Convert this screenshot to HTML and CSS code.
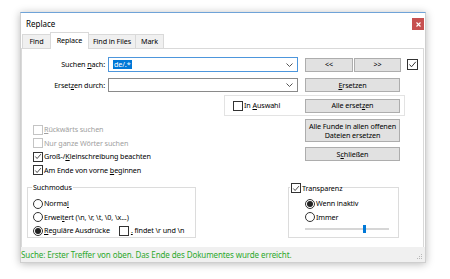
FILE: index.html
```html
<!DOCTYPE html>
<html lang="de">
<head>
<meta charset="utf-8">
<title>Replace</title>
<link rel="stylesheet" href="styles.css">
</head>
<body>
<div class="window">
  <div class="titlebar">
    <span class="title">Replace</span>
    <span class="close"><svg width="5" height="5" viewBox="0 0 5 5"><path d="M0.5 0.5 L4.5 4.5 M4.5 0.5 L0.5 4.5" stroke="#fff" stroke-width="1.1"/></svg></span>
  </div>
  <div class="tabs">
    <div class="tab t1">Find</div>
    <div class="tab active">Replace</div>
    <div class="tab t3">Find in Files</div>
    <div class="tab t4">Mark</div>
  </div>
  <div class="panel">
    <div class="row r1">
      <label class="lbl">Suchen <u>n</u>ach:</label>
      <div class="combo focus"><span class="sel">de/.*</span><svg class="chev" width="7" height="4" viewBox="0 0 7 4"><path d="M0.5 0.5 L3.5 3.5 L6.5 0.5" fill="none" stroke="#555" stroke-width="1"/></svg></div>
      <button class="btn prev">&lt;&lt;</button>
      <button class="btn next">&gt;&gt;</button>
      <span class="cb checked top"><svg width="9" height="9" viewBox="0 0 9 9"><path d="M1.5 4.5 L3.5 6.8 L7.8 1.8" fill="none" stroke="#333" stroke-width="1"/></svg></span>
    </div>
    <div class="row r2">
      <label class="lbl">Erset<u>z</u>en durch:</label>
      <div class="combo"><svg class="chev" width="7" height="4" viewBox="0 0 7 4"><path d="M0.5 0.5 L3.5 3.5 L6.5 0.5" fill="none" stroke="#555" stroke-width="1"/></svg></div>
      <button class="btn wide"><u>E</u>rsetzen</button>
    </div>
    <div class="auswahl">
      <div class="opt"><span class="cb"></span><span>In <u>A</u>uswahl</span></div>
      <button class="btn wide">Alle erset<u>z</u>en</button>
    </div>
    <div class="lower">
      <div class="checks">
        <div class="opt disabled"><span class="cb"></span><span><u>R</u>ückwärts suchen</span></div>
        <div class="opt disabled"><span class="cb"></span><span>Nur ganze Wörter suchen</span></div>
        <div class="opt"><span class="cb checked"><svg width="9" height="9" viewBox="0 0 9 9"><path d="M1.5 4.5 L3.5 6.8 L7.8 1.8" fill="none" stroke="#333" stroke-width="1"/></svg></span><span>Groß-/<u>K</u>leinschreibung beachten</span></div>
        <div class="opt"><span class="cb checked"><svg width="9" height="9" viewBox="0 0 9 9"><path d="M1.5 4.5 L3.5 6.8 L7.8 1.8" fill="none" stroke="#333" stroke-width="1"/></svg></span><span>Am Ende von vorne <u>b</u>eginnen</span></div>
      </div>
      <div class="btncol">
        <button class="btn wide tall">Alle Funde in allen offenen<br>Dateien ersetzen</button>
        <button class="btn wide">S<u>c</u>hließen</button>
      </div>
    </div>
    <div class="groups">
      <div class="group mode">
        <div class="gtitle">Suchmodus</div>
        <div class="opt"><span class="rb"></span><span>Norma<u>l</u></span></div>
        <div class="opt"><span class="rb"></span><span>Erwei<u>t</u>ert (\n, \r, \t, \0, \x...)</span></div>
        <div class="opt"><span class="rb on"></span><span><u>R</u>eguläre Ausdrücke</span><span class="cb spaced"></span><span><u>.</u> findet \r und \n</span></div>
      </div>
      <div class="group transp">
        <div class="gtitle"><span class="cb checked"><svg width="9" height="9" viewBox="0 0 9 9"><path d="M1.5 4.5 L3.5 6.8 L7.8 1.8" fill="none" stroke="#333" stroke-width="1"/></svg></span><span>Transparenz</span></div>
        <div class="opt"><span class="rb on"></span><span>Wenn inaktiv</span></div>
        <div class="opt"><span class="rb"></span><span>Immer</span></div>
        <div class="slider"><span class="thumb"></span></div>
      </div>
    </div>
  </div>
  <div class="status">
    <span>Suche: Erster Treffer von oben. Das Ende des Dokumentes wurde erreicht.</span>
    <svg class="grip" width="6" height="6" viewBox="0 0 6 6"><g fill="#b8b8b8"><rect x="4" y="0" width="1" height="1"/><rect x="2" y="2" width="1" height="1"/><rect x="4" y="2" width="1" height="1"/><rect x="0" y="4" width="1" height="1"/><rect x="2" y="4" width="1" height="1"/><rect x="4" y="4" width="1" height="1"/></g></svg>
  </div>
</div>
</body>
</html>
```

FILE: styles.css
```css
* { box-sizing: border-box; }
html, body { margin: 0; padding: 0; background: #fff; }
body {
  font-family: "Noto Sans", "Open Sans", sans-serif;
  font-size: 7.2px;
  letter-spacing: -0.1px;
  color: #000;
  width: 450px;
  height: 279px;
  overflow: hidden;
  white-space: nowrap;
}
u { text-decoration: underline; text-underline-offset: 1px; }

.window {
  margin: 12px 0 0 20px;
  width: 406px;
  height: 251px;
  border: 1px solid #cfcfcf;
  border-top-color: #6fa3d8;
  background: #fff;
  box-shadow: 0 1px 8px rgba(0,0,0,0.28);
  display: flex;
  flex-direction: column;
}

.titlebar {
  height: 19px;
  display: flex;
  align-items: flex-start;
  justify-content: space-between;
  padding-left: 5px;
}
.title { font-size: 8px; line-height: 9px; margin-top: 6px; letter-spacing: 0; }
.close {
  width: 12px;
  height: 12px;
  margin-top: 5px;
  margin-right: 1px;
  background: #c75050;
  display: flex;
  align-items: center;
  justify-content: center;
}
.close svg { display: block; }

.tabs {
  height: 16px;
  display: flex;
  align-items: flex-end;
  padding-left: 1px;
  position: relative;
  z-index: 1;
}
.tab {
  height: 14px;
  padding: 0;
  line-height: 13px;
  text-align: center;
  background: #f0f0f0;
  border: 1px solid #d9d9d9;
  border-bottom: none;
  margin-right: -1px;
}
.t1 { width: 29px; }
.tab.active {
  height: 17px;
  width: 39px;
  margin-bottom: -1px;
  background: #fff;
  line-height: 14px;
  position: relative;
  z-index: 2;
}
.t3 { width: 48px; }
.t4 { width: 29px; }

.panel {
  height: 199px;
  margin-right: 1px;
  border: 1px solid #d9d9d9;
  border-bottom: none;
  background: #fff;
}

.row { display: flex; align-items: center; }
.r1 { margin-top: 8px; height: 15px; }
.r2 { margin-top: 6px; height: 14px; }
.lbl { width: 83px; text-align: right; line-height: 9px; }

.combo {
  width: 190px;
  height: 15px;
  margin-left: 3px;
  border: 1px solid #a0a0a0;
  background: #fff;
  display: flex;
  align-items: center;
  justify-content: space-between;
  padding: 0 4px 0 4px;
}
.combo.focus { border-color: #4d96dc; }
.r2 .combo { height: 14px; border-color: #8a8a8a; justify-content: flex-end; }
.sel {
  background: #0078d7;
  color: #fff;
  line-height: 9px;
  padding: 0 1px;
}
.chev { display: block; }

.btn {
  font-family: inherit;
  font-size: 7.2px;
  letter-spacing: -0.1px;
  color: #000;
  background: #e1e1e1;
  border: 1px solid #adadad;
  height: 14px;
  line-height: 9px;
  padding: 0;
  margin: 0;
  white-space: nowrap;
}
.prev { width: 48px; margin-left: 7px; }
.next { width: 47px; margin-left: 1px; }
.wide { width: 95px; }
.r2 .wide { margin-left: 7px; }
.tall { height: 23px; }

.cb {
  width: 10px;
  height: 10px;
  border: 1px solid #333;
  background: #fff;
  display: inline-flex;
  align-items: center;
  justify-content: center;
  flex: none;
}
.cb svg { display: block; }
.cb.top { width: 11px; height: 11px; margin-left: 6px; }

.rb {
  width: 10px;
  height: 10px;
  border: 1px solid #333;
  border-radius: 50%;
  background: #fff;
  display: inline-flex;
  align-items: center;
  justify-content: center;
  flex: none;
}
.rb.on::after {
  content: "";
  width: 6px;
  height: 6px;
  border-radius: 50%;
  background: #222;
}

.opt { display: flex; align-items: center; gap: 1px; line-height: 9px; }

.auswahl {
  margin: 3px 0 0 202px;
  width: 181px;
  height: 21px;
  border: 1px solid #e3e3e3;
  display: flex;
  align-items: center;
  justify-content: space-between;
  padding: 0 4px 0 8px;
}

.lower {
  margin-top: 3px;
  height: 68px;
  display: flex;
  justify-content: space-between;
}
.checks { padding: 4px 0 0 11px; }
.checks .opt { height: 13.5px; }
.disabled { color: #a0a0a0; }
.disabled .cb { border-color: #c4c4c4; }
.btncol {
  margin-right: 23px;
  display: flex;
  flex-direction: column;
  gap: 5px;
}

.groups {
  display: flex;
  justify-content: space-between;
  padding: 0 24px 0 5px;
}
.group {
  position: relative;
  height: 51px;
  border: 1px solid #dcdcdc;
  padding-top: 9px;
}
.mode { width: 169px; padding-left: 5px; }
.transp { width: 111px; padding-left: 16px; }
.gtitle {
  position: absolute;
  top: -5px;
  left: 4px;
  background: #fff;
  padding: 0 1px;
  line-height: 9px;
  display: flex;
  align-items: center;
  gap: 1px;
}
.transp .gtitle { left: 1px; }
.group .opt { height: 13.5px; }
.cb.spaced { margin-left: 8px; margin-right: 1px; }

.slider {
  position: relative;
  margin-top: 4px;
  width: 84px;
  height: 2px;
  background: #d6d6d6;
}
.thumb {
  position: absolute;
  left: 58px;
  top: -3px;
  width: 3px;
  height: 8px;
  background: #0078d7;
}

.status {
  flex: 1;
  background: #f0f0f0;
  display: flex;
  align-items: center;
  justify-content: space-between;
  padding: 0 2px 0 0;
  color: #2ca82c;
  font-size: 8px;
  line-height: 10px;
}
.grip { display: block; align-self: flex-end; margin-bottom: 2px; }
```
